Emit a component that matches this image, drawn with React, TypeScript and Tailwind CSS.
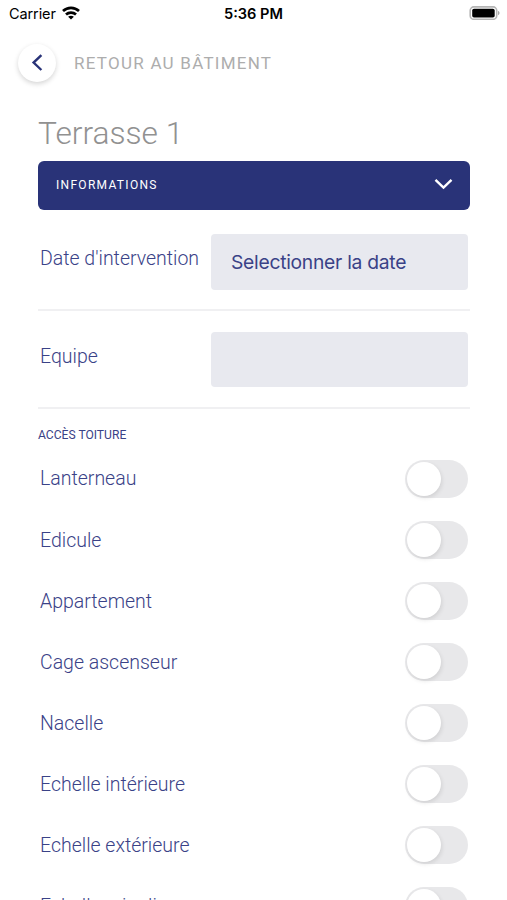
import { useState } from "react";

type ToggleRowProps = {
  label: string;
  checked: boolean;
  onToggle: () => void;
};

const ACCESS_OPTIONS = [
  "Lanterneau",
  "Edicule",
  "Appartement",
  "Cage ascenseur",
  "Nacelle",
  "Echelle intérieure",
  "Echelle extérieure",
  "Echelle crinoline"
];

function StatusBar() {
  return (
    <div className="grid grid-cols-3 items-center h-7 shrink-0 pl-[9px] pr-[7px] font-['Inter','Liberation_Sans',sans-serif] text-black">
      <div className="flex items-center gap-[6px]">
        <span className="text-[14.5px] leading-none tracking-[-0.1px]">Carrier</span>
        <svg className="-mt-[2px]" width="18" height="14" viewBox="0 0 18 14" fill="none" stroke="currentColor" strokeWidth="2.7">
          <path d="M1 5.1C5.5 .9 12.5 .9 17 5.1" />
          <path d="M4 8.6C6.8 6 11.2 6 14 8.6" />
          <path d="M9 13.6L6.1 10.8C7.8 9.4 10.2 9.4 11.9 10.8Z" fill="currentColor" stroke="none" />
        </svg>
      </div>
      <span className="-ml-[2px] text-center text-[14.6px] leading-none font-semibold whitespace-nowrap">5:36 PM</span>
      <svg className="justify-self-end -mt-[2px]" width="31" height="14" viewBox="0 0 31 14">
        <rect x="1.2" y="0.9" width="26.5" height="12.4" rx="3.6" fill="#fff" stroke="#b5b5b5" strokeWidth="1.6" />
        <rect x="3.2" y="2.7" width="22.5" height="8.8" rx="1.8" fill="#000" />
        <path d="M29 5C31 5.6 31 8.6 29 9.2Z" fill="#a8a8a8" />
      </svg>
    </div>
  );
}

function ToggleRow({ label, checked, onToggle }: ToggleRowProps) {
  return (
    <div className="flex items-center justify-between h-[61.1px] shrink-0 pl-[2px] pr-[2px]">
      <span className="pt-px text-[19.5px] font-light">{label}</span>
      <button
        type="button"
        role="switch"
        aria-checked={checked}
        aria-label={label}
        onClick={onToggle}
        className={`flex items-center w-[63px] h-[38px] px-[2px] rounded-full ${
          checked ? "justify-end bg-[#293378]" : "justify-start bg-[#e8e8ea]"
        }`}
      >
        <span className="size-[34px] rounded-full bg-white shadow-[1px_2px_4px_rgba(0,0,0,0.1)]" />
      </button>
    </div>
  );
}

export default function App() {
  const [selected, setSelected] = useState<string[]>([]);

  const toggle = (label: string) => {
    setSelected((prev) => (prev.includes(label) ? prev.filter((l) => l !== label) : [...prev, label]));
  };

  return (
    <div className="flex flex-col h-[900px] overflow-hidden bg-white font-['Roboto',sans-serif] text-[#3a4287]">
      <StatusBar />

      <header className="flex items-center h-[70px] shrink-0 pl-[18px] gap-[18px]">
        <button
          type="button"
          aria-label="Retour"
          className="grid place-items-center size-[38px] rounded-full bg-white shadow-[0_2px_5px_rgba(0,0,0,0.17)]"
        >
          <svg width="12" height="18" viewBox="0 0 12 18" fill="none" stroke="#293378" strokeWidth="2.4">
            <path d="M10.4 1.2L2.6 8.6L10.4 16" />
          </svg>
        </button>
        <span className="text-[17px] leading-none tracking-[1.25px] text-[#adadad]">RETOUR AU BÂTIMENT</span>
      </header>

      <main className="flex flex-col flex-1 min-h-0 pl-[38px] pr-[37px] pt-[15px]">
        <h1 className="h-12 shrink-0 text-[31.7px] leading-[41px] font-light text-[#919191]">Terrasse 1</h1>

        <button
          type="button"
          className="flex items-center justify-between h-[49px] shrink-0 pl-[18px] pr-[17px] rounded-[6px] bg-[#293378] text-white"
        >
          <span className="-mt-px text-[12px] tracking-[1.3px]">INFORMATIONS</span>
          <svg className="-mt-[3px]" width="19" height="12" viewBox="0 0 19 12" fill="none" stroke="currentColor" strokeWidth="2.4">
            <path d="M1.5 1.8L9.5 9.6L17.5 1.8" />
          </svg>
        </button>

        <div className="flex items-start justify-between h-[101px] shrink-0 pt-6 pl-[2px] pr-[2px] border-b-2 border-[#f0f0f2]">
          <span className="pt-[9px] text-[19.5px] leading-8 font-light whitespace-nowrap">Date d'intervention</span>
          <button
            type="button"
            className="w-[257px] h-[56px] pl-5 rounded-[4px] bg-[#e8e9ef] text-left text-[19.3px] tracking-[-0.28px] font-['Inter','Liberation_Sans',sans-serif]"
          >
            Selectionner la date
          </button>
        </div>

        <div className="flex items-start justify-between h-[98px] shrink-0 pt-[21px] pl-[2px] pr-[2px] border-b-2 border-[#f0f0f2]">
          <span className="pt-[9px] text-[19.5px] leading-8 font-light">Equipe</span>
          <div className="w-[257px] h-[55px] rounded-[4px] bg-[#e8e9ef]" />
        </div>

        <h2 className="h-[39px] shrink-0 pt-[17px] text-[12.1px] leading-[18px]">ACCÈS TOITURE</h2>

        {ACCESS_OPTIONS.map((label) => (
          <ToggleRow
            key={label}
            label={label}
            checked={selected.includes(label)}
            onToggle={() => toggle(label)}
          />
        ))}
      </main>
    </div>
  );
}
